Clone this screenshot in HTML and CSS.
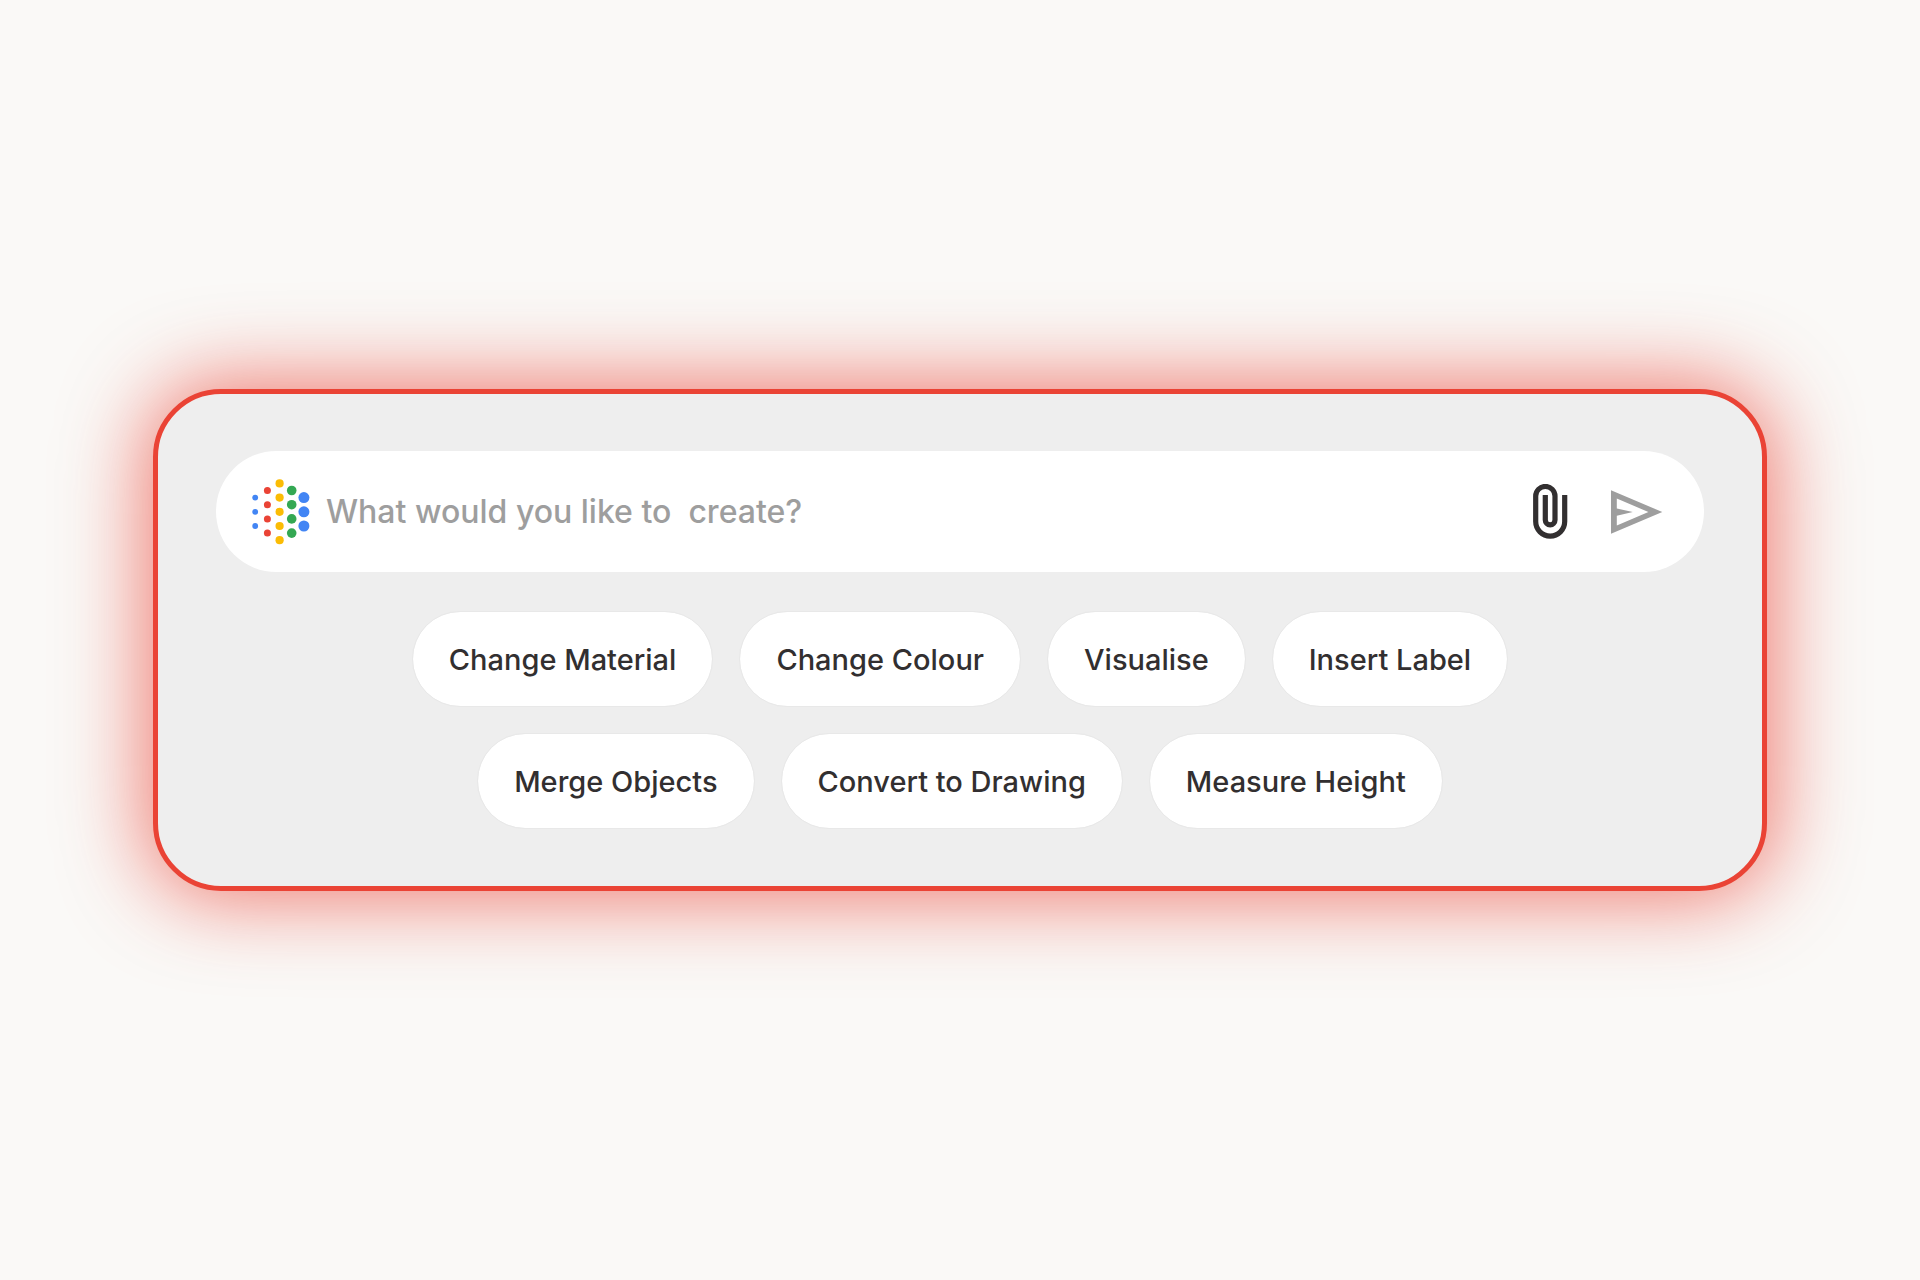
FILE: index.html
```html
<!DOCTYPE html>
<html lang="en-GB">
<head>
    <meta charset="UTF-8">
    <meta name="viewport" content="width=device-width, initial-scale=1.0">
    <title>Create</title>
    <link rel="stylesheet" href="styles.css">
</head>
<body>
    <main class="panel">
        <!-- Prompt bar -->
        <form class="prompt">
            <svg class="logo" viewBox="0 0 58 66" aria-hidden="true">
                <g fill="#4285f4">
                    <circle cx="3.2" cy="18.6" r="2.9"/>
                    <circle cx="3.2" cy="32.8" r="2.9"/>
                    <circle cx="3.2" cy="47" r="2.9"/>
                    <circle cx="51.9" cy="18.6" r="5.5"/>
                    <circle cx="51.9" cy="32.8" r="5.5"/>
                    <circle cx="51.9" cy="47" r="5.5"/>
                </g>
                <g fill="#ea4335">
                    <circle cx="15.4" cy="11.5" r="3.5"/>
                    <circle cx="15.4" cy="25.7" r="3.5"/>
                    <circle cx="15.4" cy="39.9" r="3.5"/>
                    <circle cx="15.4" cy="54.1" r="3.5"/>
                </g>
                <g fill="#fbbc04">
                    <circle cx="27.6" cy="4.4" r="4.1"/>
                    <circle cx="27.6" cy="18.6" r="4.1"/>
                    <circle cx="27.6" cy="32.8" r="4.1"/>
                    <circle cx="27.6" cy="47" r="4.1"/>
                    <circle cx="27.6" cy="61.2" r="4.1"/>
                </g>
                <g fill="#34a853">
                    <circle cx="39.7" cy="11.5" r="4.8"/>
                    <circle cx="39.7" cy="25.7" r="4.8"/>
                    <circle cx="39.7" cy="39.9" r="4.8"/>
                    <circle cx="39.7" cy="54.1" r="4.8"/>
                </g>
            </svg>
            <input class="prompt-input" type="text" aria-label="Prompt" placeholder="What would you like to  create?">
            <button class="icon-button attach" type="button" aria-label="Attach file">
                <svg width="35" height="55" viewBox="0 0 35 55">
                    <path d="M31.7 11v26.6a14.5 14.5 0 0 1-29 0V12.1a9.65 9.65 0 0 1 19.3 0V36a4.85 4.85 0 0 1-9.7 0V11" fill="none" stroke="currentColor" stroke-width="5.2"/>
                </svg>
            </button>
            <button class="icon-button send" type="submit" aria-label="Send">
                <svg width="52" height="44" viewBox="0 0 52 44">
                    <path d="M0 0.3L51.3 22 0 43.7ZM5.8 8.6V18.4L21.8 22 5.8 25.8V35.6L37.4 22Z" fill="currentColor" fill-rule="evenodd"/>
                </svg>
            </button>
        </form>

        <!-- Suggestions -->
        <div class="chips">
            <button class="chip" type="button">Change Material</button>
            <button class="chip" type="button">Change Colour</button>
            <button class="chip" type="button">Visualise</button>
            <button class="chip" type="button">Insert Label</button>
            <button class="chip" type="button">Merge Objects</button>
            <button class="chip" type="button">Convert to Drawing</button>
            <button class="chip" type="button">Measure Height</button>
        </div>
    </main>
</body>
</html>
```
FILE: styles.css
```css
* {
    box-sizing: border-box;
}
body {
    margin: 0;
    padding: 0 153px;
    min-height: 100vh;
    display: flex;
    align-items: center;
    background-color: #faf9f7;
    color: #322f30;
    font-family: Inter, "Open Sans", sans-serif;
}
.panel {
    flex: 1;
    padding: 57px 58px;
    display: flex;
    flex-direction: column;
    align-items: center;
    gap: 39px;
    background-color: #eeeeee;
    border: 5px solid #ea4335;
    border-radius: 68px;
    box-shadow: 0 0 84px 6px rgba(234, 67, 53, 0.72);
}
.prompt {
    width: 100%;
    min-height: 121px;
    padding: 0 41px 0 36px;
    display: flex;
    align-items: center;
    background-color: #ffffff;
    border-radius: 61px;
}
.logo {
    width: 58px;
    height: 66px;
    flex: none;
}
.prompt-input {
    flex: 1;
    min-width: 0;
    padding: 0 16px;
    border: none;
    outline: none;
    background: none;
    color: inherit;
    font-family: inherit;
    font-size: 32px;
    font-weight: 500;
}
.prompt-input::placeholder {
    color: #9e9e9e;
    opacity: 1;
}
.icon-button {
    padding: 0;
    border: none;
    background: none;
    cursor: pointer;
}
.icon-button svg {
    display: block;
}
.attach {
    margin-right: 43px;
    color: #322f30;
}
.send {
    color: #9e9e9e;
}
.chips {
    max-width: 1240px;
    display: flex;
    flex-wrap: wrap;
    justify-content: center;
    gap: 26px;
}
.chip {
    min-height: 96px;
    padding: 0 36px;
    border: 1px solid #e8e8e8;
    border-radius: 48px;
    background-color: #ffffff;
    background-clip: padding-box;
    color: inherit;
    font-family: inherit;
    font-size: 29px;
    font-weight: 500;
    cursor: pointer;
}
```
